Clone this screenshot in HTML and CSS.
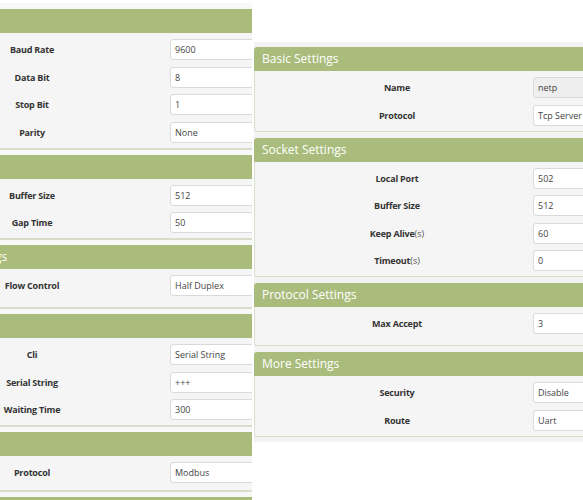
FILE: index.html
```html
<!DOCTYPE html>
<html>
<head>
    <title>Serial and Socket Settings</title>
    <link rel="stylesheet" href="styles.css">
</head>
<body>
    <div class="page">
        <!-- left capture: uart side, cut off on the left -->
        <div class="shot shot-left">
            <div class="stack">
                <section class="panel">
                    <div class="panel-head">Uart Settings</div>
                    <div class="panel-body">
                        <div class="row"><span class="row-label">Baud Rate</span><span class="field">9600</span></div>
                        <div class="row"><span class="row-label">Data Bit</span><span class="field">8</span></div>
                        <div class="row"><span class="row-label">Stop Bit</span><span class="field">1</span></div>
                        <div class="row"><span class="row-label">Parity</span><span class="field">None</span></div>
                    </div>
                </section>
                <section class="panel">
                    <div class="panel-head">Frame</div>
                    <div class="panel-body">
                        <div class="row"><span class="row-label">Buffer Size</span><span class="field">512</span></div>
                        <div class="row"><span class="row-label">Gap Time</span><span class="field">50</span></div>
                    </div>
                </section>
                <section class="panel">
                    <div class="panel-head head-shift">Serial Port Settings</div>
                    <div class="panel-body loose">
                        <div class="row"><span class="row-label">Flow Control</span><span class="field">Half Duplex</span></div>
                    </div>
                </section>
                <section class="panel">
                    <div class="panel-head">Cli</div>
                    <div class="panel-body">
                        <div class="row"><span class="row-label">Cli</span><span class="field">Serial String</span></div>
                        <div class="row"><span class="row-label">Serial String</span><span class="field">+++</span></div>
                        <div class="row"><span class="row-label">Waiting Time</span><span class="field">300</span></div>
                    </div>
                </section>
                <section class="panel">
                    <div class="panel-head">Protocol</div>
                    <div class="panel-body last">
                        <div class="row"><span class="row-label">Protocol</span><span class="field">Modbus</span></div>
                    </div>
                </section>
                <section class="panel">
                    <div class="panel-head">More</div>
                </section>
            </div>
        </div>

        <!-- right capture: socket side -->
        <div class="shot shot-right">
            <div class="stack">
                <section class="panel">
                    <div class="panel-head">Basic Settings</div>
                    <div class="panel-body">
                        <div class="row"><span class="row-label">Name</span><span class="field disabled">netp</span></div>
                        <div class="row"><span class="row-label">Protocol</span><span class="field">Tcp Server</span></div>
                    </div>
                </section>
                <section class="panel">
                    <div class="panel-head">Socket Settings</div>
                    <div class="panel-body">
                        <div class="row"><span class="row-label">Local Port</span><span class="field">502</span></div>
                        <div class="row"><span class="row-label">Buffer Size</span><span class="field">512</span></div>
                        <div class="row"><span class="row-label">Keep Alive<span class="unit">(s)</span></span><span class="field">60</span></div>
                        <div class="row"><span class="row-label">Timeout<span class="unit">(s)</span></span><span class="field">0</span></div>
                    </div>
                </section>
                <section class="panel">
                    <div class="panel-head">Protocol Settings</div>
                    <div class="panel-body loose">
                        <div class="row"><span class="row-label">Max Accept</span><span class="field">3</span></div>
                    </div>
                </section>
                <section class="panel">
                    <div class="panel-head">More Settings</div>
                    <div class="panel-body">
                        <div class="row"><span class="row-label">Security</span><span class="field">Disable</span></div>
                        <div class="row"><span class="row-label">Route</span><span class="field">Uart</span></div>
                    </div>
                </section>
            </div>
        </div>
    </div>
</body>
</html>
```

FILE: styles.css
```css
body {
    margin: 0;
    background: #fff;
    font-family: "Open Sans", "Noto Sans", sans-serif;
}
.page {
    display: flex;
    align-items: flex-start;
    width: 583px;
    height: 500px;
    overflow: hidden;
}
.shot {
    flex: none;
    overflow: hidden;
}
.shot-left {
    width: 252px;
    height: 500px;
    box-sizing: border-box;
    background: #f8f8f8;
    border-top: 3px solid #fff;
    padding-top: 6px;
}
.shot-left .stack {
    width: 420px;
    margin-left: -109px;
}
.shot-right {
    width: 329px;
    margin-left: 2px;
    margin-top: 42px;
    padding: 5px 0 5px;
    background: #f3f3f3;
}
.shot-right .stack {
    width: 420px;
}

.panel { margin-bottom: 5px; }
.shot-right .panel { margin-bottom: 6px; }
.shot-right .panel:last-child { margin-bottom: 0; }

.panel-head {
    height: 24px;
    line-height: 24px;
    padding-left: 8px;
    background: #a9bc7c;
    color: #fff;
    font-size: 12px;
    white-space: nowrap;
    border-radius: 3px 3px 0 0;
}
.head-shift { padding-left: 11px; }

.panel-body {
    display: flex;
    flex-direction: column;
    gap: 6.5px;
    padding: 6px 0 5px;
    background: #f5f5f5;
    border: 1px solid #d8dec9;
    border-top: 0;
    border-radius: 0 0 3px 3px;
}
.shot-left .panel-body { border-bottom-width: 2px; }
.panel-body.loose { padding-bottom: 11px; }
.shot-left .panel-body.last { padding-bottom: 7px; }

.row {
    display: flex;
    align-items: center;
    height: 21px;
}
.row-label {
    width: 272px;
    padding-left: 6px;
    text-align: center;
    font-size: 9px;
    font-weight: 700;
    letter-spacing: -0.2px;
    color: #333;
}
.shot-left .row-label {
    width: 276px;
    padding-left: 2px;
}
.unit {
    font-weight: 400;
    letter-spacing: 0;
    color: #555;
}
.field {
    width: 130px;
    height: 21px;
    box-sizing: border-box;
    padding-left: 4px;
    background: #fff;
    border: 1px solid #dadada;
    border-radius: 3px;
    font-size: 9px;
    line-height: 19px;
    color: #444;
}
.field.disabled { background: #eee; }
```
